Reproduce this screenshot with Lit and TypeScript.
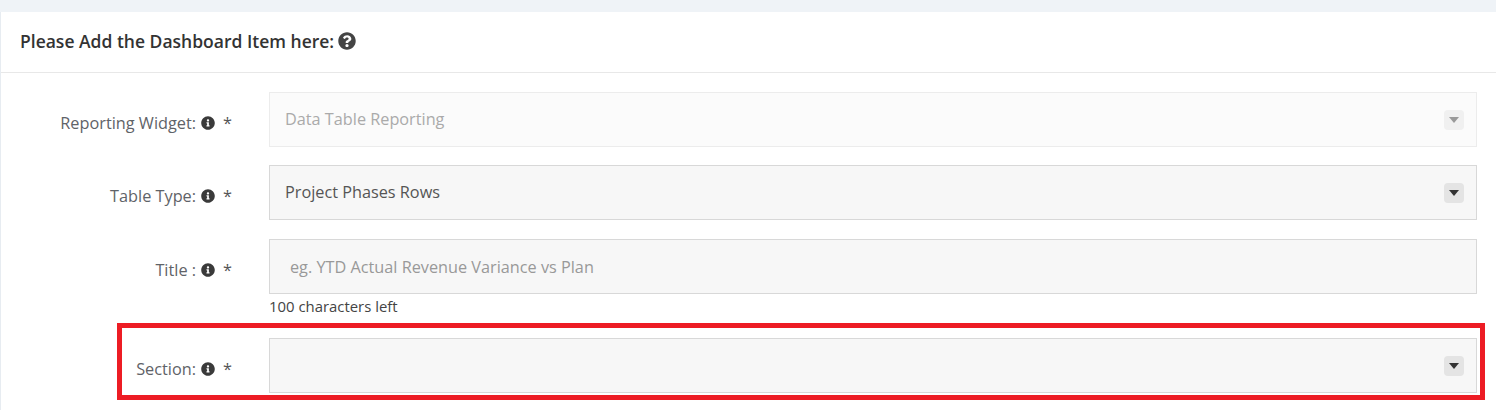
import { LitElement, html, css, svg } from "lit";
import { customElement } from "lit/decorators.js";

const infoIcon = svg`<path d="M256 8C119.043 8 8 119.083 8 256c0 136.997 111.043 248 248 248s248-111.003 248-248C504 119.083 392.957 8 256 8zm0 110c23.196 0 42 18.804 42 42s-18.804 42-42 42-42-18.804-42-42 18.804-42 42-42zm56 254c0 6.627-5.373 12-12 12h-88c-6.627 0-12-5.373-12-12v-24c0-6.627 5.373-12 12-12h12v-64h-12c-6.627 0-12-5.373-12-12v-24c0-6.627 5.373-12 12-12h64c6.627 0 12 5.373 12 12v100h12c6.627 0 12 5.373 12 12v24z"/>`;
const questionIcon = svg`<path d="M504 256c0 136.997-111.043 248-248 248S8 392.997 8 256C8 119.083 119.043 8 256 8s248 111.083 248 248zM262.655 90c-54.497 0-89.255 22.957-116.549 63.758-3.536 5.286-2.353 12.415 2.715 16.258l34.699 26.31c5.205 3.947 12.621 3.008 16.665-2.122 17.864-22.658 30.113-35.797 57.303-35.797 20.429 0 45.698 13.148 45.698 32.958 0 14.976-12.363 22.667-32.534 33.976C247.128 238.528 216 254.941 216 296v4c0 6.627 5.373 12 12 12h56c6.627 0 12-5.373 12-12v-1.333c0-28.462 83.186-29.647 83.186-106.667 0-58.002-60.165-102-116.531-102zM256 338c-25.365 0-46 20.635-46 46 0 25.364 20.635 46 46 46s46-20.636 46-46c0-25.365-20.635-46-46-46z"/>`;

@customElement("app-root")
export class AppRoot extends LitElement {
  static styles = css`
    :host {
      display: block;
      position: relative;
      height: 410px;
      overflow: hidden;
      background: #eff3f7;
      font-family: "Open Sans", sans-serif;
      color: #555;
    }

    .card {
      margin-top: 12px;
      height: 398px;
      background: #fff;
      border-left: 1px solid #e7ecf1;
      box-sizing: border-box;
    }

    .card-head {
      display: flex;
      align-items: center;
      gap: 4px;
      height: 61px;
      padding: 0 0 2px 19px;
      box-sizing: border-box;
      border-bottom: 1px solid #e8e8e8;
      font-size: 17.5px;
      font-weight: 600;
      color: #333;
    }

    .card-head svg {
      width: 18px;
      height: 18px;
      fill: #444;
    }

    .form {
      padding-top: 19px;
    }

    .row {
      display: grid;
      grid-template-columns: 230px 1208px;
      column-gap: 38px;
    }

    .row.first { margin-bottom: 18px; }
    .row.second { margin-bottom: 19px; }
    .row.third { margin-bottom: 22px; }

    .label {
      display: flex;
      justify-content: flex-end;
      align-items: center;
      height: 55px;
      padding-top: 7px;
      box-sizing: border-box;
      font-size: 16.3px;
      color: #5f6368;
    }

    .label svg {
      width: 14px;
      height: 14px;
      margin-left: 5px;
      fill: #3a3a3a;
    }

    .star {
      margin: 0 -1px 0 8px;
      color: #555;
    }

    .field {
      display: flex;
      align-items: center;
      justify-content: space-between;
      height: 55px;
      padding: 0 12px 0 15px;
      box-sizing: border-box;
      border: 1px solid #d8d8d8;
      background: #f7f7f7;
      font-size: 16.25px;
      color: #555;
    }

    .field span {
      position: relative;
      top: -1px;
    }

    .field.disabled {
      border-color: #ececec;
      background: #fbfbfb;
      color: #aaa;
    }

    .field .placeholder {
      top: 0;
      padding-left: 5px;
      color: #999;
    }

    .caret {
      display: flex;
      align-items: center;
      justify-content: center;
      width: 20px;
      height: 20px;
      border-radius: 4px;
      background: #e4e4e4;
    }

    .caret i {
      width: 0;
      height: 0;
      border-left: 5px solid transparent;
      border-right: 5px solid transparent;
      border-top: 6px solid #333;
    }

    .disabled .caret {
      background: #f0f0f0;
    }

    .disabled .caret i {
      border-top-color: #999;
    }

    .hint {
      margin-top: 2px;
      font-size: 14.9px;
      line-height: 20px;
      color: #444;
    }

    .highlight {
      position: absolute;
      left: 117px;
      top: 323px;
      width: 1368px;
      height: 77px;
      box-sizing: border-box;
      border: 5px solid #ed1c24;
      pointer-events: none;
    }
  `;

  private label(text: string) {
    return html`
      <div class="label">
        ${text}
        <svg viewBox="0 0 512 512">${infoIcon}</svg>
        <span class="star">*</span>
      </div>
    `;
  }

  private caret() {
    return html`<div class="caret"><i></i></div>`;
  }

  render() {
    return html`
      <div class="card">
        <div class="card-head">
          Please Add the Dashboard Item here:
          <svg viewBox="0 0 512 512">${questionIcon}</svg>
        </div>
        <div class="form">
          <div class="row first">
            ${this.label("Reporting Widget:")}
            <div class="field disabled"><span>Data Table Reporting</span>${this.caret()}</div>
          </div>
          <div class="row second">
            ${this.label("Table Type:")}
            <div class="field"><span>Project Phases Rows</span>${this.caret()}</div>
          </div>
          <div class="row third">
            ${this.label("Title :")}
            <div>
              <div class="field"><span class="placeholder">eg. YTD Actual Revenue Variance vs Plan</span></div>
              <div class="hint">100 characters left</div>
            </div>
          </div>
          <div class="row">
            ${this.label("Section:")}
            <div class="field"><span></span>${this.caret()}</div>
          </div>
        </div>
      </div>
      <div class="highlight"></div>
    `;
  }
}
